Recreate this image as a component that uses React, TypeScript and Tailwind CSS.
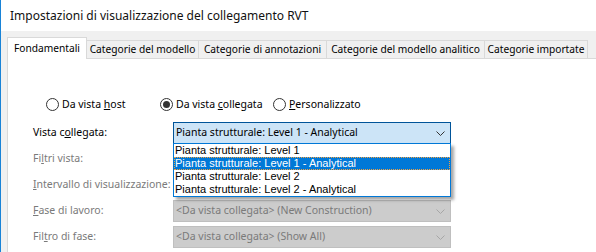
import React from "react";

function Chevron({ color }: { color: string }) {
  return (
    <svg width="9" height="5" viewBox="0 0 9 5" className="block">
      <path d="M0.5 0.5 L4.5 4.5 L8.5 0.5" fill="none" stroke={color} strokeWidth="1" />
    </svg>
  );
}

function Radio({ checked, children, w }: { checked?: boolean; children: React.ReactNode; w: string }) {
  return (
    <div className={`flex items-center gap-[3px] whitespace-nowrap ${w}`}>
      <div className="w-[13px] h-[13px] rounded-full border border-[#333333] bg-white flex items-center justify-center shrink-0">
        {checked && <div className="w-[7px] h-[7px] rounded-full bg-[#333333]" />}
      </div>
      <span className="leading-none">{children}</span>
    </div>
  );
}

function DisabledCombo({ text }: { text: string }) {
  return (
    <div className="h-[22px] w-[278px] bg-[#cccccc] border border-[#bfbfbf] flex items-center justify-between pl-[2px] pr-[5px] text-[#7a7a7a] whitespace-nowrap">
      <span>{text}</span>
      <Chevron color="#a6a6a6" />
    </div>
  );
}

const items = [
  "Pianta strutturale: Level 1",
  "Pianta strutturale: Level 1 - Analytical",
  "Pianta strutturale: Level 2",
  "Pianta strutturale: Level 2 - Analytical",
];

export default function App() {
  return (
    <div className="w-[596px] h-[252px] overflow-hidden bg-[#f0f0f0] border-l border-[#1883d7] flex flex-col font-['Noto_Sans',sans-serif] text-[10.5px] text-black">
      <div className="h-[31px] bg-white flex items-center pl-[9px] shrink-0 text-[#111] text-[12px] whitespace-nowrap">
        Impostazioni di visualizzazione del collegamento RVT
      </div>
      <div className="flex-1 flex flex-col pl-[6px] pt-[6px]">
        <div className="flex items-end h-[21px] relative z-10 whitespace-nowrap text-[10.2px]">
          <div className="w-[80px] h-[22px] -mb-[1px] bg-white border-t border-l border-r border-[#d9d9d9] flex items-center justify-center">
            Fondamentali
          </div>
          <div className="w-[112px] h-[18px] border-t border-r border-[#d9d9d9] flex items-center justify-center">
            Categorie del modello
          </div>
          <div className="w-[128px] h-[18px] border-t border-r border-[#d9d9d9] flex items-center justify-center">
            Categorie di annotazioni
          </div>
          <div className="w-[158px] h-[18px] border-t border-r border-[#d9d9d9] flex items-center justify-center">
            Categorie del modello analitico
          </div>
          <div className="w-[103px] h-[18px] border-t border-r border-[#d9d9d9] flex items-center justify-center">
            Categorie importate
          </div>
        </div>
        <div className="flex-1 bg-white border-t border-l border-[#d9d9d9] flex flex-col pl-[25px]">
          <div className="mt-[37px] h-[16px] flex items-center ml-[13px]">
            <Radio w="w-[114px]">
              Da vista <u>h</u>ost
            </Radio>
            <Radio w="w-[113px]" checked>
              Da vista <u>c</u>ollegata
            </Radio>
            <Radio w="w-[150px]">
              <u>P</u>ersonalizzato
            </Radio>
          </div>
          <div className="mt-[10px] grid grid-cols-[140px_278px] gap-y-[4px] auto-rows-[22px] whitespace-nowrap">
            <div className="flex items-center">
              Vista c<u>o</u>llegata:
            </div>
            <div className="relative">
              <div className="h-[22px] bg-[#cce4f7] border border-[#005499] flex items-center justify-between pl-[2px] pr-[5px]">
                <span>Pianta strutturale: Level 1 - Analytical</span>
                <Chevron color="#333333" />
              </div>
              <div className="absolute left-0 top-[21px] w-[278px] bg-white border border-[#0078d7] shadow-[3px_3px_3px_rgba(0,0,0,0.35)] z-20 font-['Liberation_Sans',sans-serif] text-[11px]">
                {items.map((t, i) => (
                  <div
                    key={t}
                    className={
                      i === 1
                        ? "h-[13px] leading-[13px] pl-[1px] bg-[#0078d7] text-white outline-1 outline-dotted outline-[#f0a040] -outline-offset-1"
                        : "h-[13px] leading-[13px] pl-[1px] text-black"
                    }
                  >
                    {t}
                  </div>
                ))}
              </div>
            </div>
            <div className="flex items-center text-[#7a7a7a]">
              Fi<u>l</u>tri vista:
            </div>
            <DisabledCombo text="" />
            <div className="flex items-center text-[#7a7a7a]">
              <u>I</u>ntervallo di visualizzazione:
            </div>
            <DisabledCombo text="" />
            <div className="flex items-center text-[#7a7a7a]">
              <u>F</u>ase di lavoro:
            </div>
            <DisabledCombo text="<Da vista collegata> (New Construction)" />
            <div className="flex items-center text-[#7a7a7a]">
              Fil<u>t</u>ro di fase:
            </div>
            <DisabledCombo text="<Da vista collegata> (Show All)" />
          </div>
        </div>
      </div>
    </div>
  );
}
